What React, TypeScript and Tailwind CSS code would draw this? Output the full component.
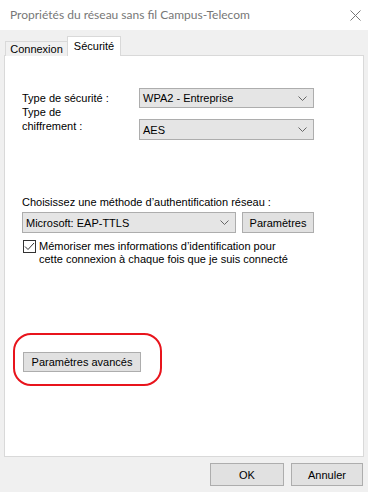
import React from "react";

function Chevron() {
  return (
    <svg width="9" height="5" viewBox="0 0 9 5" className="shrink-0">
      <polyline points="0.5,0.5 4.5,4.5 8.5,0.5" fill="none" stroke="#666" strokeWidth="1" />
    </svg>
  );
}

function Combo({ value, className }: { value: string; className: string }) {
  return (
    <div
      className={`flex items-center justify-between border border-[#adadad] bg-[#e5e5e5] pl-[3px] pr-[6px] ${className}`}
    >
      <span>{value}</span>
      <Chevron />
    </div>
  );
}

function Button({ label, className }: { label: string; className: string }) {
  return (
    <div
      className={`flex items-center justify-center border border-[#adadad] bg-[#e1e1e1] ${className}`}
    >
      {label}
    </div>
  );
}

export default function App() {
  return (
    <div
      className="relative flex h-[492px] w-[368px] flex-col bg-[#f0f0f0] text-[11px] leading-[14px] text-black"
      style={{ fontFamily: '"Segoe UI", "Liberation Sans", Arial, sans-serif' }}
    >
      {/* title bar */}
      <div className="flex h-[30px] items-center justify-between bg-white pl-[10px] pr-[7px] text-[#777]">
        <span className="text-[12px]" style={{ fontFamily: "Lato, sans-serif" }}>
          Propriétés du réseau sans fil Campus-Telecom
        </span>
        <svg width="11" height="11" viewBox="0 0 11 11">
          <path d="M0.5 0.5 L10.5 10.5 M10.5 0.5 L0.5 10.5" stroke="#777" strokeWidth="1" />
        </svg>
      </div>

      {/* tabs */}
      <div className="relative z-10 mt-[6px] flex h-[20px] items-end pl-[5px]">
        <div className="flex h-[15px] w-[62px] items-center justify-center border border-b-0 border-r-0 border-[#d9d9d9] bg-[#f0f0f0]">
          Connexion
        </div>
        <div className="flex h-[20px] w-[54px] items-start justify-center border border-b-0 border-[#d9d9d9] bg-white pt-[2px]">
          Sécurité
        </div>
      </div>

      {/* panel */}
      <div className="relative mx-[4px] -mt-px h-[402px] border border-[#d9d9d9] bg-white px-[17px] pt-[32px]">
        <div className="flex h-[20px] items-center">
          <span className="w-[117px]">Type de sécurité :</span>
          <Combo value="WPA2 - Entreprise" className="h-[20px] w-[175px]" />
        </div>
        <div className="-mt-[3px] flex items-start">
          <span className="w-[117px]">
            Type de
            <br />
            chiffrement :
          </span>
          <Combo value="AES" className="mt-[14px] h-[21px] w-[175px]" />
        </div>

        <div className="mt-[55px]">Choisissez une méthode d’authentification réseau :</div>
        <div className="mt-[3px] flex gap-[6px]">
          <Combo value="Microsoft: EAP-TTLS" className="h-[21px] w-[214px]" />
          <Button label="Paramètres" className="h-[21px] w-[72px]" />
        </div>
        <div className="mt-[7px] flex gap-[3px] pl-px leading-[13px]">
          <div className="flex h-[13px] w-[13px] shrink-0 items-center justify-center border border-[#333] bg-white">
            <svg width="11" height="9" viewBox="0 0 11 9">
              <polyline points="1,4.5 4,7.5 10,1" fill="none" stroke="#333" strokeWidth="1" />
            </svg>
          </div>
          <span>
            Mémoriser mes informations d’identification pour
            <br />
            cette connexion à chaque fois que je suis connecté
          </span>
        </div>

        <Button label="Paramètres avancés" className="mt-[86px] ml-px h-[20px] w-[118px]" />

        {/* red annotation */}
        <div className="absolute left-[8px] top-[277px] h-[53px] w-[149px] rounded-[18px] border-2 border-[#e8141c]" />
      </div>

      {/* footer */}
      <div className="mt-[6px] flex justify-end gap-[7px] pr-[5px]">
        <Button label="OK" className="h-[23px] w-[74px]" />
        <Button label="Annuler" className="h-[23px] w-[72px]" />
      </div>
    </div>
  );
}
